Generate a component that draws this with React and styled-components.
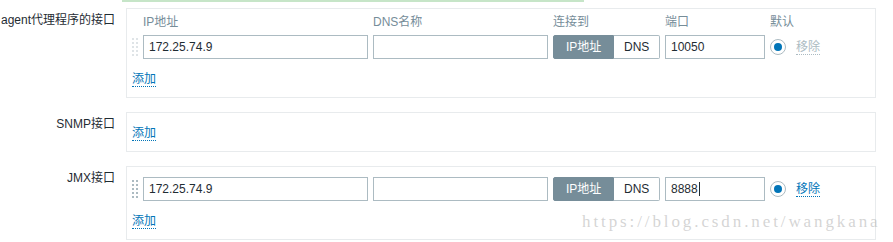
import React from 'react';
import styled, { createGlobalStyle } from 'styled-components';

const colors = {
  text: '#1f2c33',
  muted: '#768d99',
  border: '#acbbc2',
  panel: '#e8ebed',
  link: '#0275b8',
  handleOff: '#dfe4e7',
};

const columns = '6px 225px 175px 107px 100px 16px auto';

const GlobalStyle = createGlobalStyle`
  body {
    margin: 0;
    background: #fff;
    color: ${colors.text};
    font-family: "Liberation Sans", "Noto Sans CJK SC", sans-serif;
    font-size: 12px;
  }
`;

const Page = styled.div`
  position: relative;
  width: 893px;
  height: 242px;
  overflow: hidden;
`;

const MessageEdge = styled.div`
  margin-left: 122px;
  width: 462px;
  height: 2px;
  background: #c6e5c8;
`;

const Form = styled.div`
  display: flex;
  flex-direction: column;
  gap: 14px;
  margin-top: 6px;
`;

const FormRow = styled.div`
  display: flex;
  align-items: flex-start;
  gap: 11px;
`;

const Label = styled.div`
  width: 115px;
  flex: none;
  padding-top: 5px;
  line-height: 14px;
  text-align: right;
  white-space: nowrap;
`;

const Panel = styled.div`
  width: 750px;
  box-sizing: border-box;
  border: 1px solid ${colors.panel};
  padding: 10px 5px;
`;

const HeaderRow = styled.div`
  display: grid;
  grid-template-columns: ${columns};
  column-gap: 5px;
  margin: -4px 0 6px;
  line-height: 14px;
  color: ${colors.muted};
  white-space: nowrap;
`;

const InterfaceRow = styled.div`
  display: grid;
  grid-template-columns: ${columns};
  column-gap: 5px;
  align-items: center;
  height: 24px;
  margin-bottom: 10px;
`;

const Field = styled.div`
  height: 24px;
  box-sizing: border-box;
  border: 1px solid ${colors.border};
  padding: 0 5px;
  line-height: 22px;
  white-space: nowrap;
`;

const Caret = styled.span`
  display: inline-block;
  width: 1px;
  height: 14px;
  margin-left: 1px;
  vertical-align: -3px;
  background: ${colors.text};
`;

const Toggle = styled.div`
  display: flex;
  height: 24px;
`;

const ToggleButton = styled.div`
  box-sizing: border-box;
  line-height: 22px;
  white-space: nowrap;
  border: 1px solid ${p => (p.$active ? colors.muted : colors.border)};
  background: ${p => (p.$active ? colors.muted : '#fff')};
  color: ${p => (p.$active ? '#fff' : colors.text)};
  ${p =>
    p.$active
      ? 'padding: 0 12px; border-radius: 2px 0 0 2px;'
      : 'flex: 1; text-align: center; border-left: none; border-radius: 0 2px 2px 0;'}
`;

const Radio = styled.span`
  width: 16px;
  height: 16px;
  box-sizing: border-box;
  border: 1px solid ${colors.border};
  border-radius: 50%;
  display: flex;
  align-items: center;
  justify-content: center;

  &::after {
    content: '';
    width: 8px;
    height: 8px;
    border-radius: 50%;
    background: ${colors.link};
  }
`;

const Link = styled.span`
  display: inline-block;
  line-height: 14px;
  color: ${p => (p.$disabled ? colors.border : colors.link)};
  border-bottom: 1px dotted currentColor;
  white-space: nowrap;
`;

const RemoveCell = styled.div`
  margin-left: 5px;
`;

const AddRow = styled.div`
  display: flex;
  align-items: flex-start;
  padding-top: 3px;
`;

// csdn watermark laid over the bottom right corner
const Watermark = styled.div`
  position: absolute;
  left: 582px;
  top: 212px;
  font-family: "Liberation Serif", serif;
  font-size: 17px;
  letter-spacing: 2.9px;
  line-height: 20px;
  color: rgba(170, 170, 170, 0.5);
  white-space: nowrap;
  pointer-events: none;
`;

const DragHandle = ({ disabled }) => (
  <svg width="6" height="18" viewBox="0 0 6 18">
    {[0, 4, 8, 12, 16].map(y => (
      <g key={y} fill={disabled ? colors.handleOff : colors.border}>
        <rect x="0" y={y} width="2" height="2" />
        <rect x="4" y={y} width="2" height="2" />
      </g>
    ))}
  </svg>
);

const Interface = ({ ip, port, single, typing }) => (
  <InterfaceRow>
    <DragHandle disabled={single} />
    <Field>{ip}</Field>
    <Field />
    <Toggle>
      <ToggleButton $active>IP地址</ToggleButton>
      <ToggleButton>DNS</ToggleButton>
    </Toggle>
    <Field>
      {port}
      {typing && <Caret />}
    </Field>
    <Radio />
    <RemoveCell>
      <Link $disabled={single}>移除</Link>
    </RemoveCell>
  </InterfaceRow>
);

const App = () => (
  <Page>
    <GlobalStyle />
    <MessageEdge />
    <Form>
      <FormRow>
        <Label>agent代理程序的接口</Label>
        <Panel>
          <HeaderRow>
            <span />
            <span>IP地址</span>
            <span>DNS名称</span>
            <span>连接到</span>
            <span>端口</span>
            <span>默认</span>
          </HeaderRow>
          <Interface ip="172.25.74.9" port="10050" single />
          <AddRow>
            <Link>添加</Link>
          </AddRow>
        </Panel>
      </FormRow>
      <FormRow>
        <Label>SNMP接口</Label>
        <Panel>
          <AddRow>
            <Link>添加</Link>
          </AddRow>
        </Panel>
      </FormRow>
      <FormRow>
        <Label>JMX接口</Label>
        <Panel>
          <Interface ip="172.25.74.9" port="8888" typing />
          <AddRow>
            <Link>添加</Link>
          </AddRow>
        </Panel>
      </FormRow>
    </Form>
    <Watermark>https://blog.csdn.net/wangkana</Watermark>
  </Page>
);

export default App;
